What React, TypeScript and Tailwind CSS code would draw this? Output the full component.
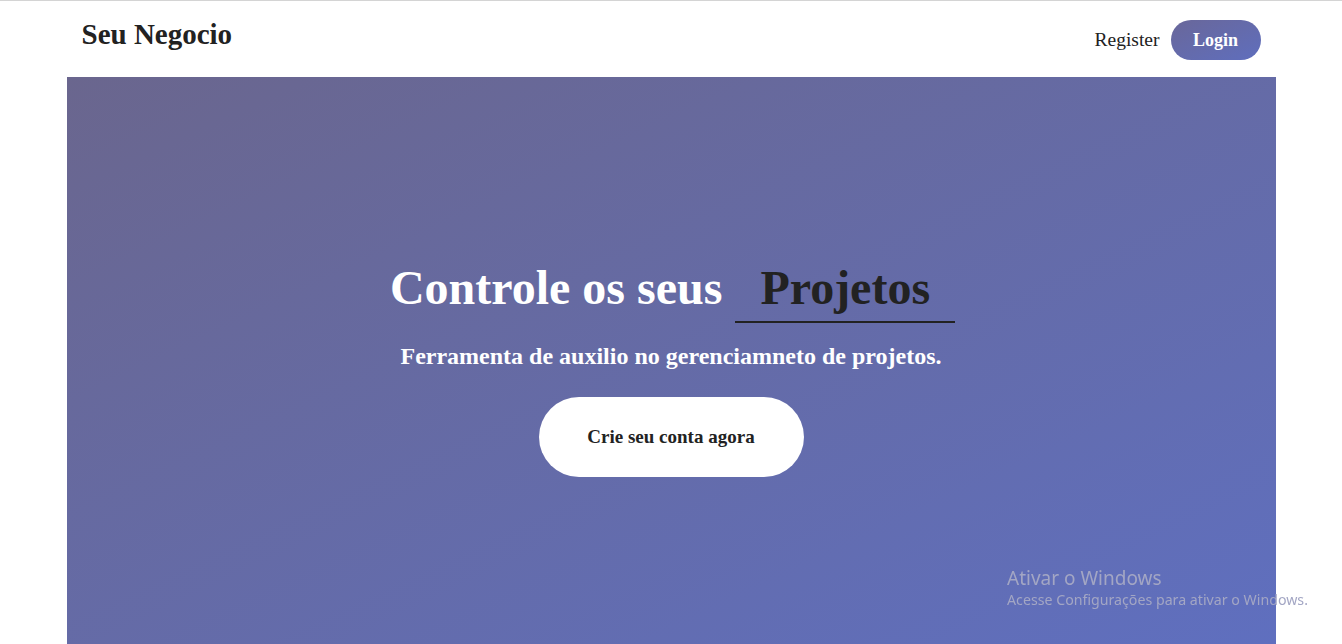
export default function App() {
  return (
    <div className="min-h-screen bg-white border-t border-[#d4d4d4]" style={{ fontFamily: '"Liberation Serif", "Times New Roman", serif' }}>
      <div className="mx-auto w-[1209px]">
        {/* Navbar */}
        <header className="flex h-[76px] items-center justify-between px-[15px]">
          <div className="mb-[8px] text-[29px] font-bold text-[#222]">Seu Negocio</div>
          <nav className="mt-[2px] flex items-center gap-[11px]">
            <a className="text-[19.5px] text-[#222]">Register</a>
            <button className="h-[40px] w-[90px] rounded-full bg-gradient-to-br from-[#69679a] to-[#5f6ebd] text-[18px] font-bold text-white">
              Login
            </button>
          </nav>
        </header>

        {/* Hero */}
        <section className="relative flex h-[567px] flex-col items-center bg-gradient-to-br from-[#6a668e] to-[#5f6fbf] pt-[187px]">
          <h1 className="ml-[3px] flex items-end text-[48px] font-bold leading-none">
            <span className="mb-[11px] text-white">Controle os seus</span>
            <span className="ml-[13px] border-b-2 border-[#222] px-[25px] pb-[9px] text-[#222]">Projetos</span>
          </h1>
          <p className="mt-[21px] text-[24px] font-bold leading-none text-white">
            Ferramenta de auxilio no gerenciamneto de projetos.
          </p>
          <button className="mt-[29px] h-[80px] w-[265px] rounded-full bg-white text-[19px] font-bold text-[#222]">
            Crie seu conta agora
          </button>
        </section>
      </div>

      {/* Windows watermark */}
      <div className="pointer-events-none fixed left-[1007px] top-[566px] text-[#a3a6c4]" style={{ fontFamily: '"Noto Sans", "Open Sans", sans-serif' }}>
        <div className="text-[19px] leading-[24px]">Ativar o Windows</div>
        <div className="text-[14.2px] leading-[20px]">Acesse Configurações para ativar o Windows.</div>
      </div>
    </div>
  );
}
